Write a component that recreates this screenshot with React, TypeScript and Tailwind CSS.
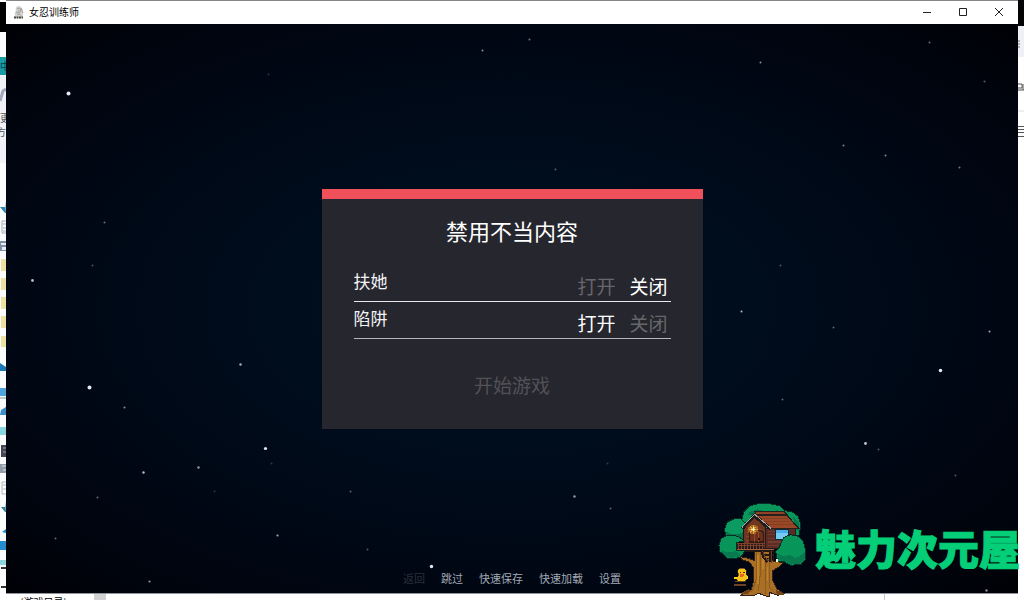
import { useState } from 'react';

const STARS: [number, number, number, number][] = [
  [68, 93, 2, 1], [268, 74, 1, 0.2], [482, 50, 1, 0.6], [529, 39, 1, 0.5], [760, 62, 1, 0.6],
  [929, 42, 1, 0.45], [984, 81, 1, 0.4], [843, 145, 1, 0.55], [885, 155, 1, 0.55], [959, 167, 1, 0.5],
  [555, 169, 1, 0.4], [104, 222, 1, 0.45], [92, 265, 1, 0.35], [32, 280, 1.4, 0.8], [780, 265, 1, 0.35],
  [741, 311, 1, 0.8], [833, 327, 1, 0.4], [989, 331, 1, 0.75], [240, 364, 1.2, 0.75], [89, 387, 2, 1],
  [124, 407, 1, 0.6], [940, 370, 1.8, 1], [782, 399, 1, 0.4], [265, 448, 1.6, 1], [271, 463, 1, 0.2],
  [865, 443, 1.4, 0.85], [878, 449, 1, 0.35], [143, 472, 1.2, 0.8], [198, 467, 1.2, 0.65], [955, 475, 1, 0.35],
  [214, 491, 1, 0.2], [97, 497, 1, 0.45], [350, 491, 1, 0.4], [607, 463, 1, 0.2], [574, 496, 1.2, 0.65],
  [610, 508, 1, 0.4], [55, 538, 1, 0.45], [277, 535, 1.1, 0.7], [367, 549, 1, 0.35], [431, 566, 1.7, 1],
  [149, 581, 1.1, 0.65], [986, 590, 1.2, 0.6],
];

function Starfield() {
  return (
    <svg
      className="absolute inset-0 h-full w-full"
      viewBox="6 24 1012 569"
      preserveAspectRatio="xMidYMid slice"
      aria-hidden="true"
    >
      {STARS.map(([x, y, r, o]) => (
        <circle key={`${x}-${y}`} cx={x + 0.5} cy={y + 0.5} r={r} fill="#dfe9f5" opacity={o} />
      ))}
    </svg>
  );
}

function AppIcon() {
  return (
    <svg className="h-[14px] w-[12px]" viewBox="0 0 12 14" aria-hidden="true">
      <path d="M3 5Q2 1 6 1Q10 2 10 7L10 12H2Q1 8 3 5Z" fill="#d2d2d0" />
      <path d="M4 4L7 3L8 6L6 8L3 7M8 3L10 8M4 9L8 10M6 5V7" stroke="#a5a5a2" fill="none" />
      <path d="M1 12.5H10" stroke="#45453f" strokeWidth="2" strokeDasharray="2 .5" />
    </svg>
  );
}

function TitleBar() {
  return (
    <header className="flex h-6 items-center border-t border-[#85858a] bg-white pr-px pb-px pl-[7px] text-black">
      <AppIcon />
      <h1 className="ml-1 flex-1 text-[10px] leading-4">女忍训练师</h1>
      <button aria-label="最小化" className="flex h-full w-9 items-center justify-center">
        <svg className="h-[10px] w-[10px]" viewBox="0 0 10 10" stroke="#222" fill="none"><path d="M1 5.5H9" /></svg>
      </button>
      <button aria-label="最大化" className="flex h-full w-9 items-center justify-center">
        <svg className="h-[10px] w-[10px]" viewBox="0 0 10 10" stroke="#222" fill="none"><path d="M1.5 1.5H8.5V8.5H1.5Z" /></svg>
      </button>
      <button aria-label="关闭窗口" className="flex h-full w-9 items-center justify-center">
        <svg className="h-[10px] w-[10px]" viewBox="0 0 10 10" stroke="#222" fill="none"><path d="M1 1L9 9M9 1L1 9" /></svg>
      </button>
    </header>
  );
}

function OptionRow({ label, initial, line }: { label: string; initial: boolean; line: string }) {
  const [on, setOn] = useState(initial);
  return (
    <div role="group" aria-label={label} className={`flex items-end justify-between border-b pr-[3px] ${line}`}>
      <span className="pb-2 text-[17px] leading-6 text-[#f3f3f5]">{label}</span>
      <div className="flex h-9 items-end gap-[14px] pb-[3px] text-[19px] leading-6">
        <button aria-pressed={on} onClick={() => setOn(true)} className={on ? 'text-white' : 'text-[#67676b]'}>
          打开
        </button>
        <button aria-pressed={!on} onClick={() => setOn(false)} className={on ? 'text-[#67676b]' : 'text-white'}>
          关闭
        </button>
      </div>
    </div>
  );
}

function ContentDialog() {
  return (
    <section className="row-start-2 w-[381px] max-w-full border-t-[10px] border-[#f0505a] bg-[#26262e] px-8 pt-[15px] pb-7">
      <h2 className="text-center text-[22px] leading-8 text-white">禁用不当内容</h2>
      <div className="pt-[19px]">
        <OptionRow label="扶她" initial={false} line="border-[#e8e8ec]" />
        <OptionRow label="陷阱" initial={true} line="border-[#b4b4c0]" />
      </div>
      <button className="mx-auto mt-[30px] block text-[19px] leading-8 text-[#525256]">开始游戏</button>
    </section>
  );
}

const MENU = ['返回', '跳过', '快速保存', '快速加载', '设置'];

function QuickMenu() {
  return (
    <nav className="row-start-3 flex gap-4 self-end pb-[7px] text-[11px] leading-4 text-[#a3aab5]">
      {MENU.map((item, i) => (
        <button key={item} disabled={i === 0} className="disabled:text-[#29303c]">
          {item}
        </button>
      ))}
    </nav>
  );
}

function LeftEdge() {
  return (
    <aside className="relative w-[6px] shrink-0 overflow-hidden bg-[#fafcfd] text-[#555]">
      <svg className="absolute top-0 left-0 h-[600px] w-[6px]" viewBox="0 0 6 600" aria-hidden="true">
        <path d="M0 2H6V32H0Z" fill="#000" />
        <path d="M0 57H6V75H0Z" fill="#189da5" />
        <path d="M0 76H6V163H0Z" fill="#f0f2f8" />
        <path d="M0 101L3 91L6 89" stroke="#a3a8bd" strokeWidth="3" fill="none" />
        <path d="M5 201V207H0L5 213H6" fill="#3285ae" />
        <path d="M6 221H2V233H6M3 224H6M3 228H6M3 231H6" stroke="#a4afb8" fill="none" />
        <path d="M0 241H6V251H0Z" fill="#8091a3" />
        <path d="M1 243H6V245H1ZM2 247H6V250H2Z" fill="#e4edf5" />
        <path d="M1 259H6V271H1ZM1 278H6V290H1ZM1 297H6V309H1ZM1 316H6V328H1ZM1 336H6V347H1Z" fill="#ece1a1" />
        <path d="M0 363L6 367V371H0Z" fill="#1d79b6" />
        <path d="M0 388H6V396H0Z" fill="#50a4dc" />
        <path d="M0 398H6" stroke="#84919b" />
        <path d="M6 407L1 410L0 415H6Z" fill="#3c90c9" />
        <path d="M0 427H6V435H0Z" fill="#8bd6de" />
        <path d="M1 445H6V457H1Z" fill="#464652" />
        <path d="M3 448H6M3 452H6" stroke="#a0a0b0" />
        <path d="M0 464H6V473H0Z" fill="#929da9" />
        <path d="M2 466H6M3 470H6" stroke="#e1e5e8" />
        <path d="M6 482H2V494H6M3 485H6M3 489H6" stroke="#b4b8bb" fill="none" />
        <path d="M5 501V507H1L5 512H6" fill="#367f9f" />
        <path d="M2 532L6 529V533Z" fill="#238ac0" />
        <path d="M0 541H6V550H0Z" fill="#258ed1" />
        <path d="M0 560H6V565H0Z" fill="#8ed5dc" />
        <path d="M1 568H6M1 587H6" stroke="#333" strokeWidth="2" />
      </svg>
      <div className="absolute top-[58px] left-0 text-[10px] leading-4 text-[#063c4b]">中</div>
      <div className="absolute top-[110px] left-0 text-[10px] leading-4">更</div>
      <div className="absolute top-[124px] right-0 text-[10px] leading-4">方</div>
    </aside>
  );
}

function RightEdge() {
  return (
    <aside className="w-[6px] shrink-0 overflow-hidden bg-white">
      <svg className="h-[140px] w-[6px]" viewBox="0 0 6 140" aria-hidden="true">
        <path d="M0 0H6V26H0Z" fill="#030306" />
        <path d="M0 26H6V57H0Z" fill="#eff0f5" />
        <path d="M1 40V48" stroke="#777" strokeDasharray="2 1" />
        <path d="M0 84H4V88H0M0 90H6M5 84V90" stroke="#555" fill="none" />
        <path d="M0 111H6" stroke="#ddd" />
        <path d="M0 126.5H6M0 129.5H6M0 132.5H6M0 136.5H6" stroke="#50545c" />
      </svg>
    </aside>
  );
}

function TreeHouse() {
  return (
    <svg className="h-[102px] w-[100px] shrink-0" viewBox="0 0 300 306" shapeRendering="crispEdges" aria-hidden="true">
      <g stroke="#052f25" strokeWidth="3">
        <path d="M79 72L86 42L104 24L130 17H164L195 24L210 38L232 42L250 55L258 82L252 112L218 126H100L78 111Z" fill="#08965a" />
        <path d="M29 92L37 72L56 63L76 62L91 75L97 104L84 132L49 130L32 117Z" fill="#0b9a60" />
      </g>
      <path d="M31 99L48 109L72 109L92 98L91 126L59 130L39 118ZM104 42L128 34L160 42L190 36L184 50H99ZM235 57L250 70L253 99L238 91Z" fill="#08764d" />
      <path d="M77 176L101 181L117 187V154H168V188L182 190L205 194L189 209L171 219L174 248L185 272L206 286L188 292L164 283L163 296L148 293L132 286L117 292H78L91 284L109 276L116 246V210L104 193L79 184Z" fill="#a96f24" stroke="#332018" strokeWidth="3" />
      <path d="M123 159V245L110 283M136 158V227L130 280M151 165V289M162 177V266L183 288" stroke="#8a5a20" strokeWidth="3" fill="none" />
      <path d="M129 170V258M144 159V214M157 207V250" stroke="#be8329" strokeWidth="5" />
      <path d="M94 83L119 58L152 88V150H86V94Z" fill="#70351f" stroke="#241614" strokeWidth="3" />
      <path d="M96 94H142M93 103H148M93 115H148M93 127H148M97 138H148M151 94V150" stroke="#8a4529" strokeWidth="3" />
      <path d="M152 91H242V128L198 151H152Z" fill="#5a2c26" stroke="#221a1c" strokeWidth="3" />
      <path d="M158 101H182M158 110H182M158 121H223M158 132H210M158 142H203" stroke="#783a2b" strokeWidth="4" />
      <path d="M119 51H214L252 91H166L128 57Z" fill="#9a4727" stroke="#27211e" strokeWidth="4" />
      <path d="M139 61H219M146 70H228M154 79H238" stroke="#83401f" strokeWidth="3" />
      <path d="M119 41H208L216 50H124Z" fill="#8f4226" stroke="#27211e" strokeWidth="3" />
      <path d="M82 91L119 52L166 92" fill="none" stroke="#211a1b" strokeWidth="9" />
      <path d="M81 88L119 49L168 91" fill="none" stroke="#aaa69f" strokeWidth="3" />
      <path d="M104 132V105L110 97H138L145 105V132Z" fill="#6e2e18" stroke="#351b16" strokeWidth="4" />
      <path d="M119 99V133M131 100V131" stroke="#8f4c28" strokeWidth="3" />
      <path d="M128 120H134V126H128Z" fill="#211613" />
      <path d="M182 95H221V123H182Z" fill="#76cbf4" stroke="#142936" strokeWidth="3" />
      <path d="M184 97H219V104H184Z" fill="#4aaceb" />
      <path d="M107 80H123V85H130V103H124V109H106V103H99V86H106Z" fill="#b06f22" opacity=".85" />
      <path d="M115 80V107M101 94H129M106 86L124 103M124 86L106 103" stroke="#dfa03a" strokeWidth="4" />
      <path d="M115 88V100M109 94H121" stroke="#fff6bd" strokeWidth="5" />
      <path d="M64 135H148V154H64Z" fill="#271a1b" />
      <path d="M64 135H151M68 143H148M69 138V153M78 138V153M87 138V153M96 138V153M105 138V153M114 138V153M123 138V153M132 138V153M141 138V153" stroke="#7c3f28" strokeWidth="3" />
      <path d="M61 154H178" stroke="#a46038" strokeWidth="4" />
      <path d="M63 158H178M139 158L145 180L157 193M165 158V193M175 158V189M147 170H176M151 181H177" stroke="#241817" strokeWidth="5" fill="none" />
      <path d="M143 158L149 176L160 189M169 158V196" stroke="#6e3b22" strokeWidth="3" fill="none" />
      <g stroke="#052f25" strokeWidth="3">
        <path d="M12 142L19 121L37 112H58L76 119L88 130L63 133V157L90 158L79 176L59 182H39L27 171L13 160Z" fill="#09945a" />
        <path d="M182 160L193 147L206 119L226 110L250 115L265 130L272 156V184L258 199L226 202L207 191L188 190Z" fill="#08955a" />
      </g>
      <path d="M15 154L34 163L61 160L76 168L73 175L48 181L29 173ZM187 167L209 175L225 169L238 180L253 175L270 162V182L256 197L225 200L206 188L190 187Z" fill="#087a50" />
      <path d="M183 182H189V191H183Z" fill="#fff1d5" />
      <path d="M68 217L73 211H89L94 218V230L98 233V241L90 251H72L65 246V238L70 234Z" fill="#f6c51b" stroke="#3a281b" strokeWidth="2" />
      <path d="M74 221H78V226H74ZM85 221H89V226H85Z" fill="#5a291a" />
      <path d="M74 230L81 226L88 231L84 238H77Z" fill="#e8622a" />
      <path d="M58 236H65V243H58ZM95 235H100V244H95Z" fill="#ffd126" />
      <path d="M59 251H91M57 261H92" stroke="#6f4123" strokeWidth="4" />
      <path d="M77 286L100 274L108 277L98 289ZM181 275L207 286L205 292H187Z" fill="#724418" />
    </svg>
  );
}

function SiteBadge() {
  return (
    <div className="absolute right-0 bottom-0 flex items-center">
      <TreeHouse />
      <span className="pr-1 pb-1 text-[41px] leading-[60px] font-black text-[#05ce78] [-webkit-text-stroke:1px_#05ce78]">
        魅力次元屋
      </span>
    </div>
  );
}

export default function App() {
  return (
    <div className="relative flex min-h-screen flex-col overflow-hidden bg-white font-['Noto_Sans_CJK_SC',sans-serif]">
      <div className="flex flex-1">
        <LeftEdge />
        <div className="flex min-w-0 flex-1 flex-col border-b border-[#92949d]">
          <TitleBar />
          <main className="relative flex flex-1 flex-col bg-[radial-gradient(ellipse_at_center,#001020_0%,#000c1b_40%,#000612_72%,#000106_100%)]">
            <Starfield />
            <div className="relative grid flex-1 grid-rows-[1fr_auto_1fr] justify-items-center">
              <ContentDialog />
              <QuickMenu />
            </div>
          </main>
        </div>
        <RightEdge />
      </div>
      <footer className="flex h-[6px] overflow-hidden bg-white pl-5 text-[10px] leading-4 text-black">
        <span className="w-[74px]">(游戏目录)</span>
        <span className="w-3 bg-[#d2d2d5]" />
        <span className="ml-auto mr-[139px] w-px bg-[#c9c9d2]" />
      </footer>
      <SiteBadge />
    </div>
  );
}
